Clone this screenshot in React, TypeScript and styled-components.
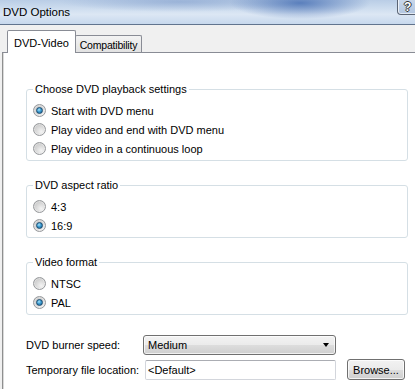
import React from 'react';
import styled, { createGlobalStyle } from 'styled-components';

const GlobalStyle = createGlobalStyle`
  html, body {
    margin: 0;
    padding: 0;
    background: #f0f0f0;
  }
  body {
    font-family: "Liberation Sans", Arial, sans-serif;
    font-size: 11px;
    color: #000;
  }
`;

const Window = styled.div`
  width: 415px;
  height: 389px;
  overflow: hidden;
  background: #f0f0f0;
  display: flex;
  flex-direction: column;
`;

const TitleBar = styled.div`
  height: 24px;
  flex: none;
  display: flex;
  align-items: center;
  justify-content: space-between;
  padding-left: 3px;
  border-bottom: 1px solid #61748e;
  background:
    radial-gradient(ellipse 70px 16px at 300px 3px, rgba(72, 112, 180, 0.85), rgba(72, 112, 180, 0)),
    radial-gradient(ellipse 120px 10px at 180px 2px, rgba(120, 150, 200, 0.5), rgba(120, 150, 200, 0)),
    linear-gradient(to bottom, #b9cde6 0%, #d3e1f1 45%, #dce7f4 60%, #c7d8ed 100%);
`;

const Title = styled.span`
  font-size: 11.5px;
  color: #000;
  margin-top: -1px;
`;

const HelpButton = styled.div`
  align-self: flex-start;
  width: 20px;
  height: 15px;
  margin-right: -2px;
  border: 1px solid #5a6474;
  border-top: none;
  border-bottom-left-radius: 4px;
  background: linear-gradient(to bottom, #c9d7ea, #b2c6e0);
  box-shadow: inset 1px 0 0 rgba(255, 255, 255, 0.7), inset 0 -1px 0 rgba(255, 255, 255, 0.6);
  color: #fff;
  font-weight: bold;
  font-size: 12px;
  line-height: 14px;
  padding-left: 6px;
  box-sizing: border-box;
  text-shadow: 1px 0 0 #333, -1px 0 0 #333, 0 1px 0 #333, 0 -1px 0 #333;
`;

const Frame = styled.div`
  flex: 1;
  display: flex;
  flex-direction: column;
  margin-left: 2px;
`;

const TabBar = styled.div`
  height: 27px;
  flex: none;
  display: flex;
  align-items: flex-end;
  padding-left: 5px;
  border-bottom: 1px solid #898c95;
`;

const Tab = styled.div<{ $active?: boolean }>`
  box-sizing: border-box;
  display: flex;
  align-items: center;
  justify-content: center;
  border: 1px solid #898c95;
  border-bottom: none;
  border-radius: 2px 2px 0 0;
  position: relative;
  height: ${p => (p.$active ? '23px' : '17px')};
  width: ${p => (p.$active ? '69px' : '67px')};
  margin-bottom: ${p => (p.$active ? '-1px' : '0')};
  margin-left: ${p => (p.$active ? '0' : '-1px')};
  padding-top: ${p => (p.$active ? '2px' : '1px')};
  background: ${p => (p.$active ? '#fff' : 'linear-gradient(to bottom, #f3f3f3, #e2e2e2)')};
  z-index: ${p => (p.$active ? 1 : 0)};
  font-size: ${p => (p.$active ? '11px' : '10.5px')};
  letter-spacing: ${p => (p.$active ? '0' : '-0.2px')};
  white-space: nowrap;
`;

const Panel = styled.div`
  flex: 1;
  background: #fff;
  border-left: 1px solid #8e8f8f;
  box-shadow: inset 1px 0 0 #dadada;
  padding: 29px 8px 0 23px;
  display: flex;
  flex-direction: column;
`;

const Group = styled.fieldset<{ $gap?: number }>`
  margin: ${p => p.$gap ?? 0}px 0 0 0;
  width: 382px;
  box-sizing: border-box;
  padding: 0 0 2px 6px;
  border: 1px solid #d5dfe5;
  border-radius: 3px;
`;

const Legend = styled.legend`
  padding: 0 2px;
  font-size: 11px;
  line-height: 14px;
`;

const RadioList = styled.div`
  padding-top: 5px;
  display: flex;
  flex-direction: column;
`;

const RadioRow = styled.label`
  height: 19px;
  display: flex;
  align-items: center;
  gap: 5px;
  font-size: 11px;
`;

const RadioCircle = styled.span<{ $checked?: boolean }>`
  width: 13px;
  height: 13px;
  box-sizing: border-box;
  border-radius: 50%;
  border: 1px solid #97999c;
  background: radial-gradient(circle at 65% 70%, #f4f4f4 0%, #dadada 45%, #bdbdbd 100%);
  box-shadow: inset 0 0 0 1px rgba(255, 255, 255, 0.35);
  display: flex;
  align-items: center;
  justify-content: center;
  flex: none;

  &::after {
    content: '';
    display: ${p => (p.$checked ? 'block' : 'none')};
    width: 7px;
    height: 7px;
    box-sizing: border-box;
    border-radius: 50%;
    border: 1px solid #1b4a6e;
    background: radial-gradient(circle at 40% 35%, #a7e3fb 0%, #3c9bd0 45%, #145c8c 100%);
  }
`;

const Radio = ({ label, checked }: { label: string; checked?: boolean }) => (
  <RadioRow>
    <RadioCircle $checked={checked} />
    <span>{label}</span>
  </RadioRow>
);

const FieldRow = styled.div<{ $gap: number }>`
  display: flex;
  align-items: center;
  margin-top: ${p => p.$gap}px;
`;

const FieldLabel = styled.span`
  width: 117px;
  flex: none;
  font-size: 11px;
`;

const Select = styled.div`
  width: 193px;
  height: 20px;
  box-sizing: border-box;
  border: 1px solid #707070;
  border-radius: 3px;
  background: linear-gradient(to bottom, #f3f3f3 0%, #ebebeb 50%, #dddddd 51%, #cfcfcf 100%);
  box-shadow: inset 0 0 0 1px rgba(255, 255, 255, 0.7);
  display: flex;
  align-items: center;
  justify-content: space-between;
  padding: 0 6px 0 4px;
  font-size: 11px;
`;

const Arrow = styled.span`
  width: 0;
  height: 0;
  border-left: 3.5px solid transparent;
  border-right: 3.5px solid transparent;
  border-top: 4px solid #000;
`;

const TextBox = styled.div`
  width: 191px;
  height: 20px;
  margin-left: 2px;
  box-sizing: border-box;
  border: 1px solid #d3d6dc;
  border-top-color: #abadb3;
  border-radius: 2px;
  background: #fff;
  display: flex;
  align-items: center;
  padding-left: 2px;
  font-size: 11px;
`;

const Button = styled.div`
  width: 58px;
  height: 21px;
  margin-left: 11px;
  box-sizing: border-box;
  border: 1px solid #707070;
  border-radius: 3px;
  background: linear-gradient(to bottom, #f2f2f2 0%, #ebebeb 50%, #dddddd 51%, #cfcfcf 100%);
  box-shadow: inset 0 0 0 1px rgba(255, 255, 255, 0.75);
  display: flex;
  align-items: center;
  justify-content: center;
  font-size: 11px;
`;

export default function App() {
  return (
    <>
      <GlobalStyle />
      <Window>
        <TitleBar>
          <Title>DVD Options</Title>
          <HelpButton>?</HelpButton>
        </TitleBar>
        <Frame>
          <TabBar>
            <Tab $active>DVD-Video</Tab>
            <Tab>Compatibility</Tab>
          </TabBar>
          <Panel>
            <Group>
              <Legend>Choose DVD playback settings</Legend>
              <RadioList>
                <Radio label="Start with DVD menu" checked />
                <Radio label="Play video and end with DVD menu" />
                <Radio label="Play video in a continuous loop" />
              </RadioList>
            </Group>
            <Group $gap={17}>
              <Legend>DVD aspect ratio</Legend>
              <RadioList>
                <Radio label="4:3" />
                <Radio label="16:9" checked />
              </RadioList>
            </Group>
            <Group $gap={17}>
              <Legend>Video format</Legend>
              <RadioList>
                <Radio label="NTSC" />
                <Radio label="PAL" checked />
              </RadioList>
            </Group>
            <FieldRow $gap={20}>
              <FieldLabel>DVD burner speed:</FieldLabel>
              <Select>
                <span>Medium</span>
                <Arrow />
              </Select>
            </FieldRow>
            <FieldRow $gap={4}>
              <FieldLabel>Temporary file location:</FieldLabel>
              <TextBox>&lt;Default&gt;</TextBox>
              <Button>Browse...</Button>
            </FieldRow>
          </Panel>
        </Frame>
      </Window>
    </>
  );
}
